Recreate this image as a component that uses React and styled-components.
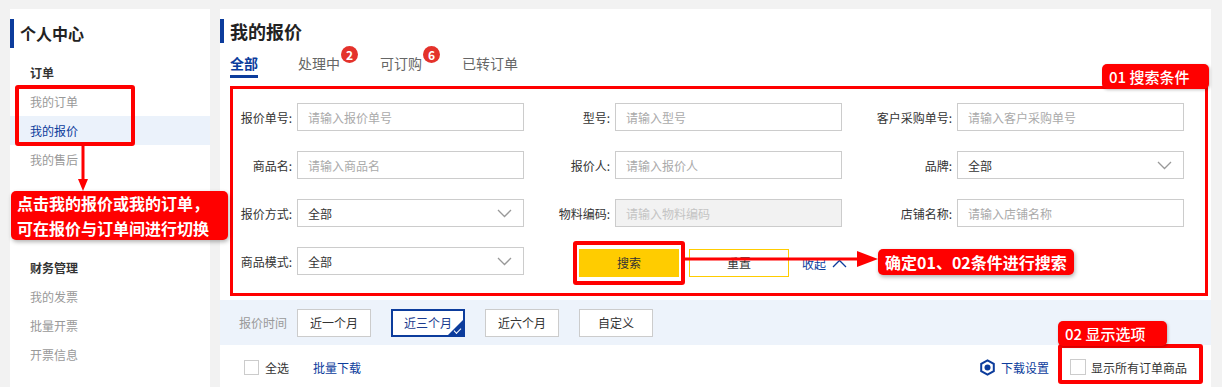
import React from "react"
import styled, { createGlobalStyle } from "styled-components"

const Blue = '#0c3c9c'
const Red = '#ff0000'

const GlobalStyle = createGlobalStyle`
    html, body {
        margin: 0;
        padding: 0;
        background: #f2f2f2;
    }
    * {
        box-sizing: border-box;
        font-family: "Noto Sans CJK SC", "Microsoft YaHei", sans-serif;
    }
`

const Page = styled.div`
    display: flex;
    gap: 10px;
    padding: 9px 0 0 10px;
    height: 100vh;
    overflow: hidden;
`

/* ---------- sidebar ---------- */

const Sidebar = styled.aside`
    position: relative;
    z-index: 2;
    width: 200px;
    flex-shrink: 0;
    background: #fff;
    padding-top: 10px;
`

const SideTitle = styled.h2`
    margin: 0;
    height: 29px;
    line-height: 29px;
    border-left: 4px solid ${Blue};
    padding-left: 6px;
    font-size: 16px;
    font-weight: bold;
    color: #222;
`

const NavGroup = styled.div`
    margin-top: ${props => props.$gap || 10}px;
`

const GroupTitle = styled.div`
    height: 29px;
    line-height: 29px;
    padding-left: 20px;
    font-size: 12px;
    font-weight: bold;
    color: #333;
`

const NavItem = styled.div`
    height: 29px;
    line-height: 29px;
    padding-left: 20px;
    font-size: 12px;
    color: ${props => props.$active ? Blue : '#999'};
    background: ${props => props.$active ? '#ebf2fb' : 'transparent'};
`

/* ---------- annotations ---------- */

const Frame = styled.div`
    position: absolute;
    left: ${props => props.$left}px;
    top: ${props => props.$top}px;
    width: ${props => props.$width}px;
    height: ${props => props.$height}px;
    border: 4px solid ${Red};
    border-radius: 3px;
    pointer-events: none;
`

const Callout = styled.div`
    position: absolute;
    left: ${props => props.$left}px;
    top: ${props => props.$top}px;
    width: ${props => props.$width ? props.$width + 'px' : 'auto'};
    height: ${props => props.$height}px;
    padding: ${props => props.$pad || '0 7px'};
    background: ${Red};
    color: #fff;
    font-size: 16px;
    font-weight: bold;
    line-height: ${props => props.$lh || props.$height}px;
    white-space: nowrap;
    border-radius: 5px;
    box-shadow: 1px 2px 4px rgba(0, 0, 0, 0.3);
`

const Tag = styled.div`
    position: absolute;
    left: ${props => props.$left !== undefined ? props.$left + 'px' : 'auto'};
    right: ${props => props.$right !== undefined ? props.$right + 'px' : 'auto'};
    top: ${props => props.$top}px;
    width: ${props => props.$width}px;
    height: 25px;
    line-height: 25px;
    padding-left: 7px;
    background: ${Red};
    color: #fff;
    font-size: 15px;
    font-weight: 500;
    border-radius: 5px;
    box-shadow: 1px 1px 3px rgba(0, 0, 0, 0.25);
    white-space: nowrap;
`

const ArrowSvg = styled.svg`
    position: absolute;
    left: ${props => props.$left}px;
    top: ${props => props.$top}px;
    overflow: visible;
`

/* ---------- main ---------- */

const Main = styled.main`
    position: relative;
    z-index: 1;
    width: 991px;
    flex-shrink: 0;
    background: #fff;
    padding-top: 10px;
`

const PageTitle = styled.h1`
    margin: 0;
    height: 24px;
    line-height: 24px;
    border-left: 4px solid ${Blue};
    padding-left: 6px;
    font-size: 18px;
    font-weight: bold;
    color: #222;
`

const Tabs = styled.div`
    display: flex;
    gap: 40px;
    margin-top: 8px;
    padding-left: 10px;
`

const Tab = styled.div`
    position: relative;
    height: 27px;
    line-height: 24px;
    font-size: 14px;
    font-weight: ${props => props.$active ? 'bold' : 'normal'};
    color: ${props => props.$active ? Blue : '#666'};
    border-bottom: 3px solid ${props => props.$active ? Blue : 'transparent'};
`

const Badge = styled.span`
    position: absolute;
    left: calc(100% + 1px);
    top: -5px;
    width: 17px;
    height: 17px;
    border-radius: 50%;
    background: #e4322b;
    color: #fff;
    font-size: 12px;
    font-weight: bold;
    line-height: 17px;
    text-align: center;
`

const SearchPanel = styled.section`
    position: relative;
    margin: 8px 3px 0 10px;
    border: 3px solid ${Red};
`

const FormGrid = styled.div`
    display: grid;
    grid-template-columns: 64px 227px 91px 227px 115px 227px;
    grid-auto-rows: 28px;
    row-gap: 20px;
    align-items: center;
    padding: 14px 0 18px;
`

const FieldLabel = styled.label`
    text-align: right;
    padding-right: 5px;
    font-size: 12px;
    color: #333;
    white-space: nowrap;
`

const TextInput = styled.input`
    width: 100%;
    height: 28px;
    border: 1px solid #ccc;
    background: ${props => props.disabled ? '#f2f2f2' : '#fff'};
    padding: 0 10px;
    font-size: 12px;
    color: #333;
    outline: none;

    &::placeholder {
        color: ${props => props.disabled ? '#c4c4c4' : '#aaa'};
    }
`

const SelectBox = styled.div`
    display: flex;
    align-items: center;
    justify-content: space-between;
    height: 28px;
    border: 1px solid #ccc;
    padding: 0 11px 0 10px;
    font-size: 12px;
    color: #333;
`

const Actions = styled.div`
    grid-column: 3 / 7;
    display: flex;
    align-items: center;
    gap: 10px;
    margin-left: 55px;
    margin-top: 4px;
`

const SearchButton = styled.div`
    position: relative;
    width: 100px;
    height: 28px;
    line-height: 28px;
    text-align: center;
    background: #ffcc00;
    font-size: 12px;
    color: #333;
`

const ResetButton = styled.div`
    width: 100px;
    height: 28px;
    line-height: 26px;
    text-align: center;
    border: 1px solid #ffcc00;
    background: #fff;
    font-size: 12px;
    color: #333;
`

const Collapse = styled.div`
    display: flex;
    align-items: center;
    gap: 6px;
    margin-left: 3px;
    font-size: 12px;
    color: ${Blue};
`

const TimeBar = styled.div`
    display: flex;
    align-items: center;
    height: 45px;
    margin-top: 4px;
    padding-left: 19px;
    background: #edf3fb;
`

const TimeLabel = styled.span`
    margin-right: 10px;
    font-size: 12px;
    color: #999;
`

const TimeOption = styled.div`
    position: relative;
    width: 74px;
    height: 28px;
    margin-right: 20px;
    display: flex;
    align-items: center;
    justify-content: center;
    background: #fff;
    border: ${props => props.$active ? `2px solid ${Blue}` : '1px solid #ccc'};
    font-size: 12px;
    color: ${props => props.$active ? '#1b3b8f' : '#333'};
    overflow: hidden;

    ${props => props.$active && `
        &::after {
            content: '';
            position: absolute;
            right: 0;
            bottom: 0;
            border-style: solid;
            border-width: 0 0 15px 15px;
            border-color: transparent transparent ${Blue} transparent;
        }
        &::before {
            content: '';
            position: absolute;
            z-index: 1;
            right: 2px;
            bottom: 3px;
            width: 6px;
            height: 3px;
            border-left: 1.5px solid #fff;
            border-bottom: 1.5px solid #fff;
            transform: rotate(-45deg);
        }
    `}
`

const ListBar = styled.div`
    display: flex;
    align-items: center;
    height: 44px;
    padding: 0 24px;
    font-size: 12px;
`

const Checkbox = styled.span`
    display: inline-block;
    width: ${props => props.$size || 15}px;
    height: ${props => props.$size || 15}px;
    border: 1px solid #ccc;
    background: #fff;
`

const CheckText = styled.span`
    margin-left: ${props => props.$gap || 6}px;
    color: #333;
`

const LinkText = styled.span`
    margin-left: ${props => props.$gap || 0}px;
    color: ${Blue};
`

const RightTools = styled.div`
    margin-left: auto;
    display: flex;
    align-items: center;
`

const ShowAll = styled.div`
    position: relative;
    display: flex;
    align-items: center;
    height: 16px;
    margin-left: 21px;
`

function Chevron({ up }) {
    return (
        <svg width="15" height="9" viewBox="0 0 15 9">
            <polyline
                points={up ? '1,8 7.5,1.5 14,8' : '1,1 7.5,7.5 14,1'}
                fill="none"
                stroke={up ? Blue : '#999'}
                strokeWidth="1.3"
            />
        </svg>
    )
}

function SettingIcon() {
    return (
        <svg width="17" height="17" viewBox="0 0 17 17">
            <polygon points="8.5,1.3 14.8,4.9 14.8,12.1 8.5,15.7 2.2,12.1 2.2,4.9" fill="none" stroke={Blue} strokeWidth="2" />
            <circle cx="8.5" cy="8.5" r="3" fill={Blue} />
        </svg>
    )
}

function Field({ label, placeholder, disabled }) {
    return (
        <>
            <FieldLabel>{label}</FieldLabel>
            <TextInput placeholder={placeholder} disabled={disabled} readOnly />
        </>
    )
}

function SelectField({ label, value }) {
    return (
        <>
            <FieldLabel>{label}</FieldLabel>
            <SelectBox>
                <span>{value}</span>
                <Chevron />
            </SelectBox>
        </>
    )
}

export default function App() {
    return (
        <>
            <GlobalStyle />
            <Page>
                <Sidebar>
                    <SideTitle>个人中心</SideTitle>
                    <NavGroup>
                        <GroupTitle>订单</GroupTitle>
                        <NavItem>我的订单</NavItem>
                        <NavItem $active>我的报价</NavItem>
                        <NavItem>我的售后</NavItem>
                    </NavGroup>
                    <NavGroup $gap={79}>
                        <GroupTitle>财务管理</GroupTitle>
                        <NavItem>我的发票</NavItem>
                        <NavItem>批量开票</NavItem>
                        <NavItem>开票信息</NavItem>
                    </NavGroup>

                    <Frame $left={5} $top={76} $width={120} $height={61} />
                    <ArrowSvg $left={67} $top={136} width="12" height="46" viewBox="0 0 12 46">
                        <rect x="4.5" y="0" width="3" height="36" fill={Red} />
                        <polygon points="1,34 11,34 6,46" fill={Red} />
                    </ArrowSvg>
                    <Callout $left={1} $top={182} $width={217} $height={49} $lh={25} $pad="0 6px">
                        点击我的报价或我的订单，<br />可在报价与订单间进行切换
                    </Callout>
                </Sidebar>

                <Main>
                    <PageTitle>我的报价</PageTitle>
                    <Tabs>
                        <Tab $active>全部</Tab>
                        <Tab>处理中<Badge>2</Badge></Tab>
                        <Tab>可订购<Badge>6</Badge></Tab>
                        <Tab>已转订单</Tab>
                    </Tabs>

                    <SearchPanel>
                        <Tag $right={-4} $top={-25} $width={107}>01 搜索条件</Tag>
                        <FormGrid>
                            <Field label="报价单号:" placeholder="请输入报价单号" />
                            <Field label="型号:" placeholder="请输入型号" />
                            <Field label="客户采购单号:" placeholder="请输入客户采购单号" />

                            <Field label="商品名:" placeholder="请输入商品名" />
                            <Field label="报价人:" placeholder="请输入报价人" />
                            <SelectField label="品牌:" value="全部" />

                            <SelectField label="报价方式:" value="全部" />
                            <Field label="物料编码:" placeholder="请输入物料编码" disabled />
                            <Field label="店铺名称:" placeholder="请输入店铺名称" />

                            <SelectField label="商品模式:" value="全部" />
                            <Actions>
                                <SearchButton>
                                    搜索
                                    <Frame $left={-6} $top={-8} $width={112} $height={44} />
                                    <ArrowSvg $left={106} $top={2} width="193" height="16" viewBox="0 0 193 16">
                                        <rect x="0" y="6.5" width="180" height="3" fill={Red} />
                                        <polygon points="172,0 193,8 172,16" fill={Red} />
                                    </ArrowSvg>
                                    <Callout $left={299} $top={0} $height={26}>确定01、02条件进行搜索</Callout>
                                </SearchButton>
                                <ResetButton>重置</ResetButton>
                                <Collapse>收起 <Chevron up /></Collapse>
                            </Actions>
                        </FormGrid>
                    </SearchPanel>

                    <TimeBar>
                        <TimeLabel>报价时间</TimeLabel>
                        <TimeOption>近一个月</TimeOption>
                        <TimeOption $active>近三个月</TimeOption>
                        <TimeOption>近六个月</TimeOption>
                        <TimeOption>自定义</TimeOption>
                    </TimeBar>

                    <ListBar>
                        <Checkbox />
                        <CheckText>全选</CheckText>
                        <LinkText $gap={24}>批量下载</LinkText>
                        <RightTools>
                            <SettingIcon />
                            <LinkText $gap={5}>下载设置</LinkText>
                            <ShowAll>
                                <Checkbox $size={16} />
                                <CheckText $gap={5}>显示所有订单商品</CheckText>
                                <Frame $left={-12} $top={-15} $width={145} $height={40} />
                                <Tag $left={-12} $top={-38} $width={109}>02 显示选项</Tag>
                            </ShowAll>
                        </RightTools>
                    </ListBar>
                </Main>
            </Page>
        </>
    )
}
